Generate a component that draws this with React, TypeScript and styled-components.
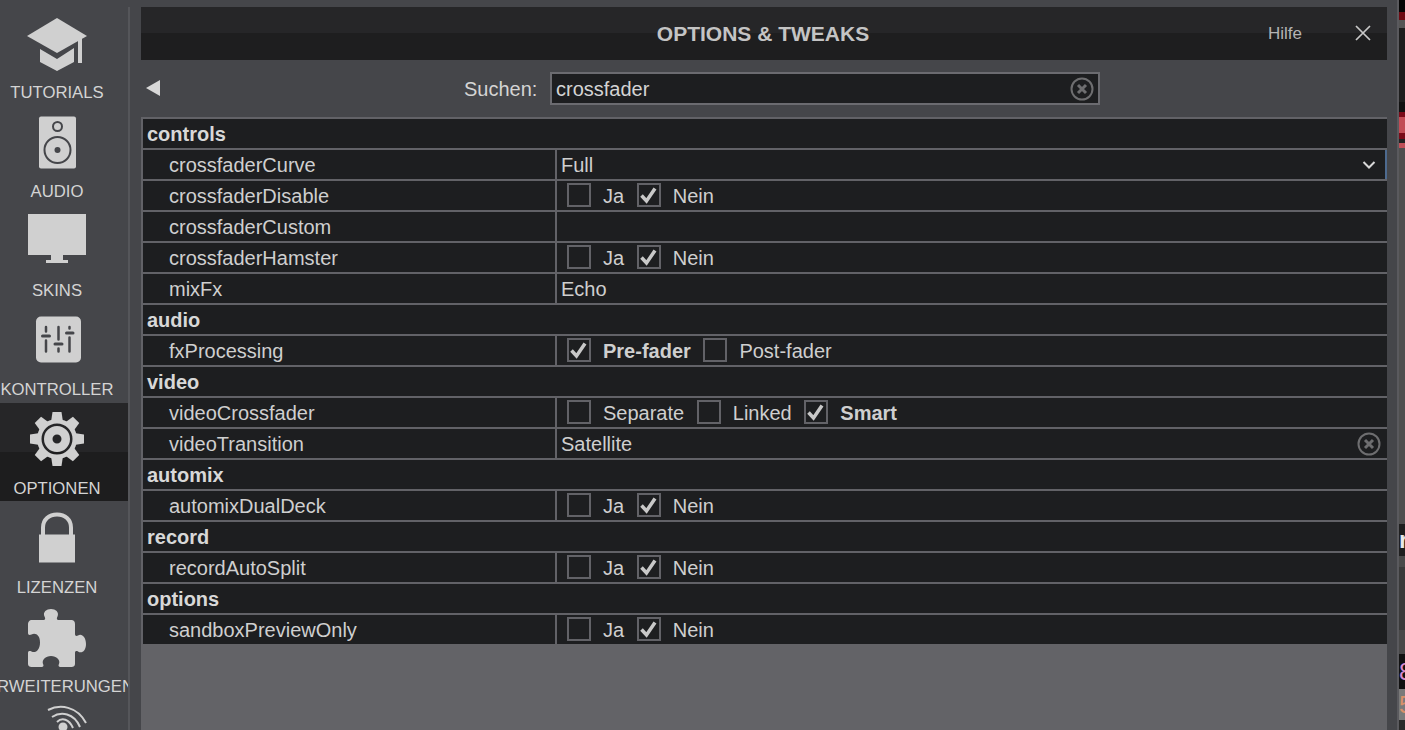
import type { ReactNode } from "react"
import styled, { createGlobalStyle } from "styled-components"

const GlobalStyle = createGlobalStyle`
  html, body {
    margin: 0;
    padding: 0;
    height: 100%;
    overflow: hidden;
    background: #45464a;
  }
  * { box-sizing: border-box; }
`

type Row =
  | { kind: "section"; name: string }
  | { kind: "check"; name: string; options: { label: string; checked?: boolean }[] }
  | { kind: "text"; name: string; value?: string; control?: "chevron" | "clear" }

const yesNo = [{ label: "Ja" }, { label: "Nein", checked: true }]

const rows: Row[] = [
  { kind: "section", name: "controls" },
  { kind: "text", name: "crossfaderCurve", value: "Full", control: "chevron" },
  { kind: "check", name: "crossfaderDisable", options: yesNo },
  { kind: "text", name: "crossfaderCustom" },
  { kind: "check", name: "crossfaderHamster", options: yesNo },
  { kind: "text", name: "mixFx", value: "Echo" },
  { kind: "section", name: "audio" },
  { kind: "check", name: "fxProcessing", options: [{ label: "Pre-fader", checked: true }, { label: "Post-fader" }] },
  { kind: "section", name: "video" },
  {
    kind: "check",
    name: "videoCrossfader",
    options: [{ label: "Separate" }, { label: "Linked" }, { label: "Smart", checked: true }],
  },
  { kind: "text", name: "videoTransition", value: "Satellite", control: "clear" },
  { kind: "section", name: "automix" },
  { kind: "check", name: "automixDualDeck", options: yesNo },
  { kind: "section", name: "record" },
  { kind: "check", name: "recordAutoSplit", options: yesNo },
  { kind: "section", name: "options" },
  { kind: "check", name: "sandboxPreviewOnly", options: yesNo },
]

const ICON = "#d0d0d0"
const BG = "#45464a"

// every nav icon shares one 114x72 canvas, the drawing is moved into place inside it
const NavGlyph = ({ x, y, children }: { x: number; y: number; children: ReactNode }) => (
  <svg width="114" height="72" viewBox="0 0 114 72">
    <g transform={`translate(${x} ${y})`}>{children}</g>
  </svg>
)

const TutorialsIcon = () => (
  <NavGlyph x={27} y={11}>
    <path fill={ICON} d="M30 0 60 18 30 35 0 18Z" />
    <path fill={ICON} d="M13 31 30 41 47 30V44L30 53 13 44Z" />
    <rect fill={ICON} x="51" y="20" width="4" height="25" />
  </NavGlyph>
)

const AudioIcon = () => (
  <NavGlyph x={38.5} y={10.5}>
    <rect fill={ICON} x="0.500" y="0" width="37" height="52" rx="2" />
    <circle cx="19" cy="10" r="4.500" fill="none" stroke={BG} strokeWidth="2" />
    <circle cx="19" cy="33.500" r="13" fill="none" stroke={BG} strokeWidth="2" />
    <circle cx="19" cy="33.500" r="3" fill={BG} />
  </NavGlyph>
)

const SkinsIcon = () => (
  <NavGlyph x={27} y={9}>
    <rect fill={ICON} x="1" y="0" width="58" height="41" />
    <rect fill={ICON} x="24" y="41" width="12" height="5" />
    <rect fill={ICON} x="19" y="46" width="22" height="3" />
  </NavGlyph>
)

const KontrollerIcon = () => (
  <NavGlyph x={35.5} y={12.5}>
    <rect fill={ICON} x="0.500" y="0" width="45" height="46" rx="5" />
    <g stroke={BG} strokeWidth="2.500" strokeLinecap="round" fill="none">
      <path d="M10.500 10.500V15M10.500 24V35M23 10.500V23M23 32V35M34 10.500V12M34 21V35" />
      <path d="M7 19.500H14M19.500 27.500H26.500M31 16.500H37.500" strokeWidth="3" />
    </g>
  </NavGlyph>
)

const ring = (outer: number, inner: number) =>
  `M0 ${-outer}A${outer} ${outer} 0 1 1 0 ${outer}A${outer} ${outer} 0 1 1 0 ${-outer}Z` +
  `M0 ${-inner}A${inner} ${inner} 0 1 0 0 ${inner}A${inner} ${inner} 0 1 0 0 ${-inner}Z`

const OptionenIcon = () => (
  <NavGlyph x={57} y={36}>
    {[0, 45, 90, 135, 180, 225, 270, 315].map((angle) => (
      <polygon key={angle} fill={ICON} points="-6,-17 -4.500,-27 4.500,-27 6,-17" transform={`rotate(${angle})`} />
    ))}
    <path fill={ICON} fillRule="evenodd" d={ring(20, 15.5)} />
    <path fill={ICON} fillRule="evenodd" d={ring(13, 4.5)} />
  </NavGlyph>
)

const LizenzenIcon = () => (
  <NavGlyph x={39} y={10.5}>
    <rect fill={ICON} x="0" y="22" width="36" height="28" />
    <path fill="none" stroke={ICON} strokeWidth="4" d="M4 24V15C4 7 10 2 18 2S32 7 32 15V24" />
  </NavGlyph>
)

const ErweiterungenIcon = () => (
  <NavGlyph x={27.5} y={8}>
    <path
      fill={ICON}
      d="M4 11H16C18 11 18 9 17 7.500 15 3 19 0 23.500 0S32 3 30 7.500C29 9 29 11 31 11H44C46 11 47.500 12.500 47.500 15V25C47.500 27 49 27.500 50.500 26.500 54 24 58.500 28 58.500 35S54 45 50.500 42.500C49 41.500 47.500 42 47.500 44V55C47.500 57 46 58 44 58H33C31 58 30.500 56.500 31.500 55 33 51 29 47 23.500 47S14 51 15.500 55C16.500 56.500 16 58 14 58H4C2 58 0.500 57 0.500 55V44C0.500 42 2 41.500 4 42.500 8 44.500 12.500 41 12.500 33.500S8 23.500 4 25.500C2 26.500 0.500 26 0.500 24V15C0.500 13 2 11 4 11Z"
    />
  </NavGlyph>
)

const WifiIcon = () => (
  <NavGlyph x={47} y={5}>
    <g fill="none" stroke={ICON} strokeWidth="2">
      <path d="M1 5C13 -1 30 1 39 18" />
      <path d="M5 12C14 6 27 8 33 22" />
      <path d="M10 17C15 12 22 14 26 23" />
    </g>
    <circle cx="16" cy="22" r="4.500" fill={ICON} />
  </NavGlyph>
)

const navItems = [
  { label: "TUTORIALS", icon: <TutorialsIcon /> },
  { label: "AUDIO", icon: <AudioIcon /> },
  { label: "SKINS", icon: <SkinsIcon /> },
  { label: "KONTROLLER", icon: <KontrollerIcon /> },
  { label: "OPTIONEN", icon: <OptionenIcon />, active: true },
  { label: "LIZENZEN", icon: <LizenzenIcon /> },
  { label: "ERWEITERUNGEN", icon: <ErweiterungenIcon />, nudge: 3 },
  { label: "", icon: <WifiIcon /> },
]

const ClearIcon = () => (
  <svg width="24" height="24" viewBox="0 0 24 24">
    <circle cx="12" cy="12" r="10.500" fill="none" stroke="#6e6e70" strokeWidth="2" />
    <path d="M8 8 16 16M16 8 8 16" stroke="#6e6e70" strokeWidth="3" />
  </svg>
)

const Chevron = styled.svg`
  margin-right: 5px;
`

const Tick = () => (
  <svg width="20" height="20" viewBox="0 0 20 20">
    <path d="M2.500 10.500 7.500 16 16 3.500" fill="none" stroke="#c8c8c8" strokeWidth="3.500" />
  </svg>
)

export default function App() {
  return (
    <Page>
      <GlobalStyle />
      <Sidebar>
        {navItems.map((item, index) => (
          <NavItem key={`nav-${index}`} $active={item.active}>
            {item.icon}
            <NavLabel $nudge={item.nudge ?? 0}>{item.label}</NavLabel>
          </NavItem>
        ))}
      </Sidebar>
      <Main>
        <TitleBar>
          <Title>OPTIONS &amp; TWEAKS</Title>
          <HelpLink>Hilfe</HelpLink>
          <CloseIcon width="16" height="16" viewBox="0 0 16 16">
            <path d="M1 1 15 15M15 1 1 15" stroke="#c8c8c8" strokeWidth="1.700" />
          </CloseIcon>
        </TitleBar>
        <SearchBar>
          <BackArrow />
          <SearchLabel>Suchen:</SearchLabel>
          <SearchBox>
            <SearchText>crossfader</SearchText>
            <ClearIcon />
          </SearchBox>
        </SearchBar>
        <Table>
          {rows.map((row) => {
            if (row.kind === "section") {
              return <SectionRow key={row.name}>{row.name}</SectionRow>
            }

            return (
              <OptionRow key={row.name}>
                <OptionName>{row.name}</OptionName>
                <OptionValue $focused={row.control === "chevron"}>
                  {row.kind === "text" && (
                    <>
                      <ValueText>{row.value}</ValueText>
                      {row.control === "chevron" && (
                        <Chevron width="14" height="10" viewBox="0 0 14 10">
                          <path d="M1.500 2 7 7.500 12.500 2" fill="none" stroke="#d8d8d8" strokeWidth="2" />
                        </Chevron>
                      )}
                      {row.control === "clear" && <ClearIcon />}
                    </>
                  )}
                  {row.kind === "check" && (
                    <Checks>
                      {row.options.map((option) => (
                        <Check key={option.label}>
                          <CheckBox>{option.checked && <Tick />}</CheckBox>
                          <CheckLabel $strong={option.checked && option.label !== "Nein"}>
                            {option.label}
                          </CheckLabel>
                        </Check>
                      ))}
                    </Checks>
                  )}
                </OptionValue>
              </OptionRow>
            )
          })}
        </Table>
      </Main>
      <Strip>
        <StripBlock $height={12} $color="#050505" />
        <StripBlock $height={8} $color="#6d0a12" />
        <StripBlock $height={8} $color="#555555" />
        <StripBlock $height={74} $color="#1e1e1e" />
        <StripBlock $height={10} $color="#111111" />
        <StripBlock $height={5} $color="#7a0a18" />
        <StripBlock $height={16} $color="#c24c55" />
        <StripBlock $height={6} $color="#7a0a18" />
        <StripBlock $height={4} $color="#222222" />
        <StripBlock $height={5} $color="#c05058" />
        <StripBlock $height={376} $color="#4f4f4f" />
        <StripBlock $height={32} $color="#1f1f1f">
          <StripGlyph $color="#e8e8e8" $weight={700}>r</StripGlyph>
        </StripBlock>
        <StripBlock $height={11} $color="#4a4a4a" />
        <StripBlock $height={63} $color="#3a3a3a" />
        <StripBlock $height={24} $color="#484848" />
        <StripBlock $height={35} $color="#111111">
          <StripGlyph $color="#d68ad0" $weight={400}>8</StripGlyph>
        </StripBlock>
        <StripBlock $height={31} $color="#7a7a7a">
          <StripGlyph $color="#d8906a" $weight={400}>5</StripGlyph>
        </StripBlock>
        <StripBlock $height={10} $color="#2a2a2a" />
      </Strip>
    </Page>
  )
}

const Page = styled.div`
  display: flex;
  width: 1405px;
  height: 730px;
  overflow: hidden;
  background: ${BG};
  font-family: "Liberation Sans", Arial, sans-serif;
`

const Sidebar = styled.nav`
  display: flex;
  flex-direction: column;
  flex: none;
  width: 130px;
  height: 723px;
  margin-top: 7px;
  overflow: hidden;
  border-right: 2px solid #55565a;
`

const NavItem = styled.div<{ $active?: boolean }>`
  display: flex;
  flex-direction: column;
  align-items: flex-start;
  flex: none;
  height: 98px;
  margin-bottom: 1px;
  background: ${(p) => (p.$active ? "linear-gradient(#262628 50%, #1d1d1e 50%)" : "transparent")};
`

const NavLabel = styled.div<{ $nudge: number }>`
  display: flex;
  justify-content: center;
  width: 114px;
  margin-top: 5px;
  font-size: 16.700px;
  line-height: 18px;
  color: #d4d4d4;
  white-space: nowrap;
  transform: translateX(${(p) => p.$nudge}px);
`

const Main = styled.main`
  display: flex;
  flex-direction: column;
  flex: none;
  width: 1246px;
  margin: 7px 0 0 11px;
`

const TitleBar = styled.header`
  position: relative;
  display: flex;
  align-items: center;
  justify-content: center;
  flex: none;
  height: 53px;
  background: linear-gradient(#262628 26px, #1e1e1f 26px);
`

const Title = styled.h1`
  margin: 0 0 0 -2px;
  font-size: 21px;
  font-weight: 700;
  color: #c4c4c4;
`

const HelpLink = styled.span`
  position: absolute;
  left: 1127px;
  top: 17px;
  font-size: 17px;
  color: #b4b4b4;
`

const CloseIcon = styled.svg`
  position: absolute;
  left: 1214px;
  top: 18px;
`

const SearchBar = styled.div`
  position: relative;
  display: flex;
  align-items: center;
  flex: none;
  height: 57px;
  padding-left: 323px;
`

const BackArrow = styled.div`
  position: absolute;
  left: 5px;
  top: 20px;
  width: 0;
  height: 0;
  border-top: 8px solid transparent;
  border-bottom: 8px solid transparent;
  border-right: 14px solid #d8d8d8;
`

const SearchLabel = styled.span`
  width: 86px;
  padding-top: 1px;
  font-size: 20px;
  color: #d4d4d4;
`

const SearchBox = styled.div`
  display: flex;
  align-items: center;
  justify-content: space-between;
  width: 550px;
  height: 33px;
  padding: 0 4px;
  background: #1d1e20;
  border: 2px solid #6b6b70;
`

const SearchText = styled.span`
  padding-top: 1px;
  font-size: 20px;
  color: #d4d4d4;
`

const Table = styled.div`
  display: flex;
  flex-direction: column;
  flex: 1;
  background: #636367;
  border-top: 2px solid #626267;
`

const SectionRow = styled.div`
  height: 31px;
  padding: 0 4px;
  font-size: 20px;
  font-weight: 700;
  line-height: 31px;
  color: #d8d8d8;
  background: #1d1e20;
  border-left: 2px solid #626267;
  border-bottom: 2px solid #626267;
  overflow: hidden;
`

const OptionRow = styled.div`
  display: flex;
  height: 31px;
  background: #1d1e20;
  border-left: 2px solid #626267;
  border-bottom: 2px solid #626267;
  &:last-child {
    height: 29px;
    border-bottom: 0;
  }
`

const OptionName = styled.div`
  flex: none;
  width: 414px;
  padding-left: 26px;
  font-size: 20px;
  line-height: 31px;
  color: #cfcfcf;
  border-right: 2px solid #626267;
`

const OptionValue = styled.div<{ $focused?: boolean }>`
  display: flex;
  align-items: center;
  justify-content: space-between;
  flex: 1;
  min-width: 0;
  padding: 0 4px 0 4px;
  border-right: 2px solid ${(p) => (p.$focused ? "#4d6a8f" : "transparent")};
`

const ValueText = styled.span`
  padding-top: 2px;
  font-size: 20px;
  color: #cfcfcf;
`

const Checks = styled.div`
  display: flex;
  align-self: stretch;
  gap: 12.600px;
  padding-left: 6px;
`

const Check = styled.label`
  display: flex;
  align-items: flex-start;
  gap: 12px;
`

const CheckBox = styled.span`
  display: flex;
  align-items: center;
  justify-content: center;
  width: 24px;
  height: 24px;
  margin-top: 2px;
  border: 2px solid #626267;
`

const CheckLabel = styled.span<{ $strong?: boolean }>`
  font-size: 20px;
  line-height: 31px;
  font-weight: ${(p) => (p.$strong ? 700 : 400)};
  color: #cfcfcf;
`

const Strip = styled.aside`
  display: flex;
  flex-direction: column;
  flex: none;
  width: 8px;
  margin-left: 10px;
  border-left: 2px solid #5a5a5e;
`

const StripBlock = styled.div<{ $height: number; $color: string }>`
  display: flex;
  align-items: center;
  flex: none;
  height: ${(p) => p.$height}px;
  overflow: hidden;
  background: ${(p) => p.$color};
`

const StripGlyph = styled.span<{ $color: string; $weight: number }>`
  font-size: 24px;
  font-weight: ${(p) => p.$weight};
  line-height: 1;
  color: ${(p) => p.$color};
`
